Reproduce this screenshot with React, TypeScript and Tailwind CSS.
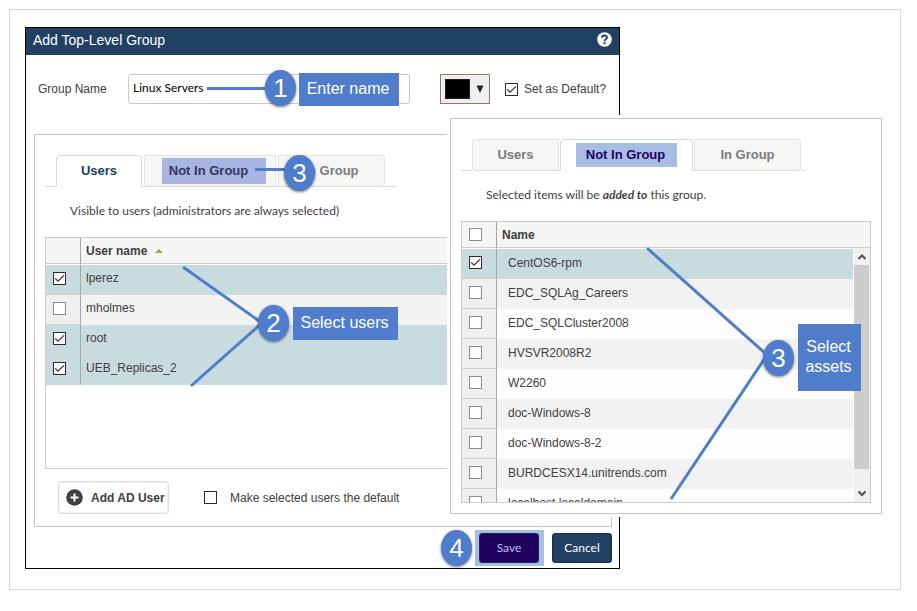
import { useState, type ReactNode } from "react";

type Row = { name: string; checked?: boolean };

const users: Row[] = [
  { name: "lperez", checked: true },
  { name: "mholmes" },
  { name: "root", checked: true },
  { name: "UEB_Replicas_2", checked: true },
];

const assets: Row[] = [
  { name: "CentOS6-rpm", checked: true },
  { name: "EDC_SQLAg_Careers" },
  { name: "EDC_SQLCluster2008" },
  { name: "HVSVR2008R2" },
  { name: "W2260" },
  { name: "doc-Windows-8" },
  { name: "doc-Windows-8-2" },
  { name: "BURDCESX14.unitrends.com" },
  { name: "localhost.localdomain" },
];

type CheckboxProps = {
  id?: string;
  label?: string;
  checked?: boolean;
  dark?: boolean;
};

const Checkbox = ({ id, label, checked = false, dark }: CheckboxProps) => (
  <span className="relative block size-[13px] shrink-0">
    <input
      id={id}
      type="checkbox"
      aria-label={label}
      defaultChecked={checked}
      className={`peer block size-[13px] appearance-none border bg-white checked:border-[#2b2b2b] ${
        dark ? "border-[#2b2b2b]" : "border-[#8c8c8c]"
      }`}
    />
    <svg
      viewBox="0 0 13 13"
      className="pointer-events-none absolute inset-0 hidden size-[13px] peer-checked:block"
    >
      <path
        d="M2.2 6.4 L5 9.2 L11 3.4"
        fill="none"
        stroke="#333"
        strokeWidth="1.3"
      />
    </svg>
  </span>
);

type TabProps = {
  active?: boolean;
  className: string;
  children: ReactNode;
};

const Tab = ({ active, className, children }: TabProps) => (
  <button
    type="button"
    role="tab"
    aria-selected={!!active}
    className={`flex h-8 shrink-0 items-center justify-center border text-[13px] font-bold ${
      active
        ? "rounded-t-[4px] border-[#d9d9d9] border-b-white bg-white text-[#214162]"
        : "border-[#e3e3e3] border-b-[#d9d9d9] bg-[#f6f6f4] text-[#7b7b7b]"
    } ${className}`}
  >
    {children}
  </button>
);

const Badge = ({ className, n }: { className: string; n: number }) => (
  <span
    className={`absolute flex h-9 w-[31px] items-center justify-center rounded-[50%] bg-[#4f7dcb] text-[26px] leading-9 text-white shadow-[0_1px_3px_rgba(0,0,0,0.55)] ${className}`}
  >
    {n}
  </span>
);

const Callout = ({
  className,
  children,
}: {
  className: string;
  children: ReactNode;
}) => (
  <span
    className={`absolute flex justify-center bg-[#4f7dcb] pr-0.5 text-center text-base leading-5 text-white ${className}`}
  >
    {children}
  </span>
);

const rowColor = (row: Row, index: number) =>
  row.checked ? "bg-[#c8dbdf]" : index % 2 ? "bg-[#f2f2f2]" : "bg-[#fdfdfd]";

type NameTableProps = {
  rows: Row[];
  heading: ReactNode;
  selectAll?: boolean;
  indent?: boolean;
};

const NameTable = ({ rows, heading, selectAll, indent }: NameTableProps) => (
  <table className="w-full table-fixed border-separate border-spacing-0 text-left text-xs">
    <thead>
      <tr className="bg-[#f5f5f4]">
        <th className="h-[26px] w-[35px] border-r border-b border-r-[#a6a6a6] border-b-[#ccc] py-0 pl-[7px]">
          {selectAll && <Checkbox label="Select all" />}
        </th>
        <th className="border-b border-[#ccc] py-0 pl-[5px] font-bold">
          {heading}
        </th>
      </tr>
    </thead>
    <tbody className="before:block before:h-px">
      {rows.map((row, i) => (
        <tr key={row.name} className={rowColor(row, i)}>
          <td
            className={`h-[30px] border-r border-b border-r-[#a6a6a6] border-b-[#cfcfcf] pt-0 pb-0.5 pl-[7px] ${
              row.checked ? "" : "bg-[#efefed]"
            }`}
          >
            <Checkbox label={row.name} checked={row.checked} />
          </td>
          <td
            className={`pt-0 ${indent ? "pb-0.5 pl-[11px]" : "pb-1 pl-[5px]"}`}
          >
            {row.name}
          </td>
        </tr>
      ))}
    </tbody>
  </table>
);

const AssetsPanel = () => (
  <section className="absolute top-[108px] right-[18px] left-[440px] border border-[#c6c6c6] bg-white px-2.5 pt-5 pb-2.5 shadow-[0_0_0_3px_#fff]">
    <div role="tablist" className="flex">
      <span className="w-[11px] border-b border-[#d9d9d9]" />
      <Tab className="w-[87px] rounded-l-[4px]">Users</Tab>
      <span className="w-px border-b border-[#d9d9d9]" />
      <Tab active className="w-[133px]">
        <span className="bg-[#a9bde3] py-[3px] pr-3 pl-2.5 text-[#1d0066]">
          Not In Group
        </span>
      </Tab>
      <span className="w-px border-b border-[#d9d9d9]" />
      <Tab className="w-[107px] rounded-r-[4px]">In Group</Tab>
      <span className="w-1 border-b border-[#d9d9d9]" />
    </div>

    <p className="mt-[15px] pl-[25px] font-[Lato,sans-serif] text-xs leading-[18px]">
      Selected items will be <em className="font-bold">added to</em> this group.
    </p>

    <div className="relative mt-[17px] h-[282px] overflow-hidden border border-[#ccc]">
      <NameTable rows={assets} heading="Name" selectAll indent />
      <div className="absolute top-[26px] right-0 bottom-0 flex w-[17px] flex-col items-center border-r border-l border-r-[#f0f0f0] border-l-white bg-[#f0f0f0]">
        <svg viewBox="0 0 16 17" className="h-[17px] w-4">
          <path
            d="M4.5 11 L8 7.5 L11.5 11"
            fill="none"
            stroke="#505050"
            strokeWidth="2"
          />
        </svg>
        <div className="mb-4 w-full grow bg-[#cdcdcd]" />
        <svg viewBox="0 0 16 17" className="h-[17px] w-4">
          <path
            d="M4.5 6.5 L8 10 L11.5 6.5"
            fill="none"
            stroke="#505050"
            strokeWidth="2"
          />
        </svg>
      </div>
    </div>

    {/* --- CALLOUTS --- */}
    <svg
      viewBox="0 0 430 394"
      className="pointer-events-none absolute top-0 left-0 h-[394px] w-[430px]"
    >
      <path
        d="M196 129 L316 236 L220 380"
        fill="none"
        stroke="#4f7dcb"
        strokeWidth="3"
      />
    </svg>
    <Badge n={3} className="top-[221px] left-[312px]" />
    <Callout className="top-[205px] left-[347px] h-[67px] w-[63px] pt-[13px]">
      Select
      <br />
      assets
    </Callout>
  </section>
);

const App = () => {
  const [groupName, setGroupName] = useState("Linux Servers");

  return (
    <div className="min-h-screen bg-white pt-[9px] pr-4 pb-[21px] pl-[9px] font-['Liberation_Sans',Arial,sans-serif] text-xs text-[#404040]">
      <main className="relative border border-[#d6d6d6] pt-[17px] pr-[280px] pb-5 pl-[15px]">
        <div className="relative border border-black">
          <header className="flex h-[27px] items-center justify-between bg-[#214162] px-[7px] pb-1 text-white">
            <h1 className="text-sm">Add Top-Level Group</h1>
            <button type="button" aria-label="Help">
              <svg viewBox="0 0 15 15" className="block size-[15px]">
                <circle cx="7.5" cy="7.5" r="7.3" fill="#fff" />
                <path
                  d="M5 5.8 C5 2.8 10 2.8 10 5.6 C10 7.4 7.6 7.3 7.6 9.2"
                  fill="none"
                  stroke="#214162"
                  strokeWidth="1.9"
                />
                <rect x="6.6" y="10.2" width="2" height="2" fill="#214162" />
              </svg>
            </button>
          </header>

          <div className="border-x-[3px] border-[#f8f8f8] pb-0.5">
            {/* --- GROUP NAME --- */}
            <div className="flex items-center pt-[19px] pl-[9px]">
              <label htmlFor="group-name" className="w-[90px]">
                Group Name
              </label>
              <input
                id="group-name"
                type="text"
                value={groupName}
                onChange={(e) => setGroupName(e.target.value)}
                className="h-[30px] w-[282px] rounded-[3px] border border-[#c8c8c8] bg-white px-1 pb-1 font-[Lato,sans-serif] text-xs text-black outline-none"
              />
              <button
                type="button"
                aria-label="Group color"
                className="ml-[30px] flex h-[30px] w-[50px] items-center justify-between border border-[#98755a] bg-[#eee] pr-[5px] pl-1"
              >
                <span className="h-5 w-[25px] border border-[#222] bg-black" />
                <svg viewBox="0 0 8 8" className="size-2">
                  <path d="M0.5 0.5 H7.5 L4 8 Z" fill="#222" />
                </svg>
              </button>
              <label className="ml-[15px] flex items-center gap-1.5">
                <Checkbox checked dark />
                Set as Default?
              </label>
            </div>

            {/* --- USERS --- */}
            <section className="mt-[30px] mr-1 ml-[5px] border border-[#c6c6c6] px-2.5 pt-5 pb-3">
              <div role="tablist" className="flex">
                <span className="w-[11px] border-b border-[#d9d9d9]" />
                <Tab active className="w-[86px]">
                  Users
                </Tab>
                <span className="w-0.5 border-b border-[#d9d9d9]" />
                <Tab className="w-[132px]">
                  <span className="ml-2 bg-[#a9b4e2] py-1 pr-[18px] pl-[7px] text-[#33345f]">
                    Not In Group
                  </span>
                </Tab>
                <span className="w-0.5 border-b border-[#d9d9d9]" />
                <Tab className="w-[107px] rounded-r-[4px]">In Group</Tab>
                <span className="w-3 border-b border-[#d9d9d9]" />
              </div>

              <p className="mt-[15px] pl-[25px] font-[Lato,sans-serif] text-xs leading-[18px]">
                Visible to users (administrators are always selected)
              </p>

              <div className="mt-[17px] h-[232px] border border-[#ccc]">
                <NameTable
                  rows={users}
                  heading={
                    <span className="flex items-center gap-2">
                      User name
                      <svg viewBox="0 0 8 4" className="h-1 w-2">
                        <path d="M0 4 L4 0 L8 4 Z" fill="#7fb93c" />
                      </svg>
                    </span>
                  }
                />
              </div>

              <div className="flex items-center pt-3 pl-[13px]">
                <button
                  type="button"
                  className="flex h-[33px] w-[111px] items-center gap-2 rounded-[3px] border border-[#dcdcdc] bg-white pl-[7px] font-bold shadow-[inset_0_0_0_1px_#f0f0f0]"
                >
                  <svg viewBox="0 0 17 17" className="size-[17px] shrink-0">
                    <circle cx="8.5" cy="8.5" r="8.3" fill="#404040" />
                    <path
                      d="M8.5 4.5 V12.5 M4.5 8.5 H12.5"
                      stroke="#fff"
                      strokeWidth="2"
                    />
                  </svg>
                  <span className="whitespace-nowrap">Add AD User</span>
                </button>
                <label className="ml-[35px] flex items-center gap-[13px]">
                  <Checkbox dark />
                  Make selected users the default
                </label>
              </div>
            </section>

            {/* --- ACTIONS --- */}
            <footer className="flex items-center justify-end gap-2 pt-[3px] pr-1 font-[Lato,sans-serif]">
              <span className="bg-[#a9bde3] py-[3px] pr-[5px] pl-1">
                <button
                  type="button"
                  className="block h-[30px] w-[60px] rounded-[3px] border border-[#12304e] bg-[#20005f] text-[#b3c3e6]"
                >
                  Save
                </button>
              </span>
              <button
                type="button"
                className="h-[30px] w-[60px] rounded-[3px] border border-[#152f49] bg-[#214162] text-white"
              >
                Cancel
              </button>
            </footer>
          </div>

          {/* --- CALLOUTS --- */}
          <svg
            viewBox="0 0 420 400"
            className="pointer-events-none absolute top-0 left-0 h-[400px] w-[420px]"
          >
            <g fill="none" stroke="#4f7dcb" strokeWidth="3">
              <path d="M181 60.5 H242" />
              <path d="M229 141.5 H262" />
              <path d="M157 239 L236 295 L165 358" />
            </g>
          </svg>
          <Badge n={1} className="top-[42px] left-[239px]" />
          <Callout className="top-[45px] left-[273px] h-[33px] w-[100px] pt-1.5">
            Enter name
          </Callout>
          <Badge n={3} className="top-[127px] left-[258px]" />
          <Badge n={2} className="top-[277px] left-[232px]" />
          <Callout className="top-[279px] left-[267px] h-[33px] w-[105px] pt-1.5">
            Select users
          </Callout>
          <Badge n={4} className="right-[147px] bottom-0.5" />
        </div>

        <AssetsPanel />
      </main>
    </div>
  );
};

export default App;
